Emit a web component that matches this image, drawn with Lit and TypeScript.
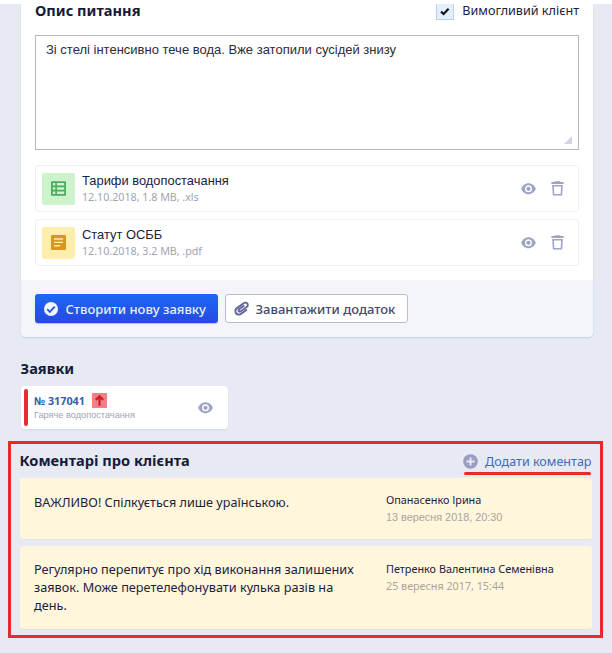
import { LitElement, html, css, svg, TemplateResult } from "lit";
import { customElement } from "lit/decorators.js";

interface FileItem { kind: "xls" | "pdf"; name: string; meta: string; }
interface Comment { text: string; author: string; date: string; tone: string; }

const files: FileItem[] = [
  { kind: "xls", name: "Тарифи водопостачання", meta: "12.10.2018, 1.8 MB, .xls" },
  { kind: "pdf", name: "Статут ОСББ", meta: "12.10.2018, 3.2 MB, .pdf" },
];

const comments: Comment[] = [
  { text: "ВАЖЛИВО! Спілкується лише ураїнською.", author: "Опанасенко Ірина", date: "13 вересня 2018, 20:30", tone: "short" },
  { text: "Регулярно перепитує про хід виконання залишених заявок. Може перетелефонувати кулька разів на день.", author: "Петренко Валентина Семенівна", date: "25 вересня 2017, 15:44", tone: "tall" },
];

const icon = (size: number, box: string, body: TemplateResult | unknown) =>
  html`<svg width=${size} height=${size} viewBox=${box}>${body}</svg>`;

const eye = () => html`<svg width="15" height="12" viewBox="0 0 15 12">
  <path fill="#9fa3c5" fill-rule="evenodd" d="M7.5 .3C4.2.3 1.4 2.6.2 5.8c1.2 3.2 4 5.5 7.3 5.5s6.1-2.3 7.3-5.5C13.6 2.6 10.8.3 7.5.3zm0 2a3.5 3.5 0 1 1 0 7 3.5 3.5 0 0 1 0-7z"/>
  <circle cx="7.5" cy="5.8" r="2.1" fill="#9fa3c5"/></svg>`;

const trash = () => html`<svg width="13" height="15" viewBox="0 0 13 15">
  <path fill="#9fa3c5" d="M4 .3h5l.6.8h3v1.9H.4V1.1h3z"/>
  <path fill="none" stroke="#9fa3c5" stroke-width="1.6" d="M2 4.7h9l-.6 9H2.6z"/></svg>`;

const sheet = svg`<path fill="#4bad5b" fill-rule="evenodd" d="M1 .2h13a1 1 0 0 1 1 1v12.6a1 1 0 0 1-1 1H1a1 1 0 0 1-1-1V1.2a1 1 0 0 1 1-1zM1.8 2v2.5h2.5V2zM5.9 2v2.5h7.3V2zM1.8 6.2v2.6h2.5V6.2zM5.9 6.2v2.6h7.3V6.2zM1.8 10.5V13h2.5v-2.5zM5.9 10.5V13h7.3v-2.5z"/>`;
const doc = svg`<rect width="15" height="15" rx="1.3" fill="#d89722"/><path stroke="#ffedac" stroke-width="1.4" d="M3 4h9M3 7.4h9M3 10.8h6"/>`;
const check = svg`<circle cx="7" cy="7" r="7" fill="#f3f6ff"/><path fill="none" stroke="#245be9" stroke-width="1.9" d="M3.2 7.2l2.6 2.6 5-5.2"/>`;
const plus = svg`<circle cx="7.5" cy="7.5" r="7.3" fill="#999dc0"/><path stroke="#e7eaf3" stroke-width="2" d="M7.5 3.4v8.2M3.4 7.5h8.2"/>`;
const clip = svg`<path fill="#62639a" transform="rotate(10 224 256)" d="M43.246 466.142c-58.43-60.289-57.341-157.511 1.386-217.581L254.392 34c44.316-45.332 116.351-45.336 160.671 0 43.89 44.894 43.943 117.329 0 162.276L232.214 383.128c-29.855 30.537-78.633 30.111-107.982-.998-28.275-29.97-27.368-77.473 1.452-106.953l143.743-146.835c6.182-6.314 16.312-6.422 22.626-.241l22.861 22.379c6.315 6.182 6.422 16.312.241 22.626L171.427 319.927c-4.932 5.045-5.236 13.428-.648 18.292 4.372 4.634 11.245 4.711 15.688.165l182.849-186.851c19.613-20.062 19.613-52.725-.011-72.798-19.189-19.627-49.957-19.637-69.154 0L90.39 293.295c-34.763 35.56-35.299 93.12-1.191 128.313 34.01 35.093 88.985 35.137 123.058.286l172.06-175.999c6.177-6.319 16.307-6.433 22.626-.256l22.877 22.364c6.319 6.177 6.434 16.307.256 22.626l-172.06 175.998c-59.576 60.938-155.943 60.216-214.77-.485z"/>`;
const arrow = svg`<rect width="15" height="15" rx=".8" fill="#f08086"/><path fill="none" stroke="#ca2026" stroke-width="2.2" d="M7.5 12.8V3.6M3.8 6.9l3.7-3.7 3.7 3.7"/>`;

@customElement("app-root")
export class AppRoot extends LitElement {
  static styles = css`
    :host { display: block; height: 653px; overflow: hidden; background: #e7eaf3; border-top: 4px solid #fff; box-sizing: border-box; color: #1d2140; font-family: "Noto Sans", "Open Sans", sans-serif; }
    * { box-sizing: border-box; }
    svg { display: block; flex: none; }
    h2 { margin: 0; font-size: 14.6px; line-height: 18px; font-weight: 700; color: #171b38; white-space: nowrap; }
    .card { margin: 0 19px 0 21px; height: 333px; background: #fff; border-radius: 0 0 5px 5px; box-shadow: 0 1px 2px #c9cfe4; display: flex; flex-direction: column; }
    .body { flex: 1; padding: 0 14px; }
    .head { display: flex; justify-content: space-between; height: 31px; }
    .head h2 { line-height: 12px; }
    .flag { display: flex; gap: 8px; font-size: 12.6px; line-height: 14px; white-space: nowrap; }
    .box { width: 18px; height: 16px; background: #e4effd; border: 1px solid #bfd0ee; border-top: 0; display: grid; place-items: center; }
    .area { position: relative; height: 115px; border: 1px solid #b4b8c6; padding: 5px 10px; font: 13px/18px "Liberation Sans", Arial, sans-serif; color: #2a2c38; white-space: nowrap; }
    .grip { position: absolute; right: 6px; bottom: 5px; }
    .files { margin-top: 15px; display: grid; gap: 7px; }
    .file { height: 47px; border: 1px solid #eeeff6; border-radius: 3px; display: flex; align-items: center; padding: 0 14.5px 0 6px; }
    .thumb { width: 33px; height: 32px; border-radius: 2px; display: grid; place-items: center; margin-right: 7px; }
    .xls { background: #cdf3cc; }
    .pdf { background: #ffedac; }
    .info { flex: 1; white-space: nowrap; }
    .name { font: 12.9px/17px "Liberation Sans", Arial, sans-serif; color: #1d2140; }
    .meta { font-size: 10.7px; line-height: 17px; color: #a0a3b3; }
    .file .tools { display: flex; gap: 15px; align-items: center; }
    .foot { height: 57px; background: #f4f5fa; border-radius: 0 0 5px 5px; padding: 14px; display: flex; gap: 7px; }
    .btn { height: 29px; border-radius: 3px; display: flex; align-items: center; white-space: nowrap; font-size: 13px; line-height: 20px; font-weight: 500; padding: 0 0 0 9px; gap: 7.5px; }
    .primary { width: 183px; background: linear-gradient(#1c68f5, #2649e2); color: #e8efff; box-shadow: 0 1px 1px #b9c3e4; }
    .plain { width: 183px; background: #fff; border: 1px solid #b9bdcc; color: #44486d; padding-left: 7.5px; gap: 7px; }
    .tickets { padding: 22px 21px 0 20.5px; height: 100px; }
    .ticket { margin: 9px 0 0 .5px; width: 207px; height: 43px; background: #fff; border-radius: 4px; box-shadow: 0 1px 2px #d4d9e8; display: flex; align-items: center; padding: 0 15px 0 3px; }
    .bar { width: 4px; height: 37px; border-radius: 2px; background: #e82c33; margin-right: 6px; }
    .tinfo { flex: 1; white-space: nowrap; }
    .num { display: flex; gap: 7.5px; align-items: center; height: 15px; font-size: 10.8px; font-weight: 700; color: #3460ac; }
    .sub { font: 9.2px/13px "Liberation Sans", Arial, sans-serif; color: #a0a3b3; margin-top: 1px; }
    .frame { margin: 4px 9px 0 8px; height: 197px; border: 3px solid #e72c26; padding: 0 8px 0 9px; }
    .chead { display: flex; justify-content: space-between; height: 34px; padding-top: 7px; }
    .chead h2 { margin-left: -.5px; }
    .add { position: relative; display: flex; gap: 7px; align-items: center; height: 20px; font-size: 12.55px; color: #426bb5; white-space: nowrap; padding-right: .5px; }
    .mark { position: absolute; left: 1px; right: 1px; bottom: -4px; height: 3px; border-radius: 2px; background: #e72c26; }
    .note { background: #fff6dc; border-radius: 3px; display: grid; grid-template-columns: 352px 1fr; padding: 14px 14px 0; box-shadow: 0 1px 1px #e4e3e2; }
    .short { height: 61px; }
    .tall { height: 83px; margin-top: 7px; padding-top: 15px; }
    .text { font-size: 12.7px; line-height: 18px; width: 335px; }
    .short .text { font-size: 12.65px; padding-top: 1px; }
    .tall .text { margin-top: -1px; }
    .author { font-size: 10.85px; line-height: 16px; white-space: nowrap; }
    .date { font-size: 10.75px; line-height: 18px; color: #a9a59c; white-space: nowrap; }
    .short .date { font: 10.85px/18px "Liberation Sans", Arial, sans-serif; }
  `;

  render() {
    return html`
      <section class="card">
        <div class="body">
          <div class="head">
            <h2>Опис питання</h2>
            <div class="flag">
              <span class="box"><svg width="10" height="9" viewBox="0 0 10 9"><path fill="none" stroke="#15171f" stroke-width="2.2" d="M1 4.6l2.6 2.4L8.6 1.8"/></svg></span>
              <span>Вимогливий клієнт</span>
            </div>
          </div>
          <div class="area"><span>Зі стелі інтенсивно тече вода. Вже затопили сусідей знизу</span>
            <svg class="grip" width="8" height="8" viewBox="0 0 8 8"><path fill="#d3d5e0" d="M8 0v8H0z"/></svg>
          </div>
          <div class="files">
            ${files.map((f) => html`<div class="file">
              <span class="thumb ${f.kind}">${icon(15, "0 0 15 15", f.kind === "xls" ? sheet : doc)}</span>
              <div class="info"><div class="name">${f.name}</div><div class="meta">${f.meta}</div></div>
              <div class="tools">${eye()}${trash()}</div>
            </div>`)}
          </div>
        </div>
        <div class="foot">
          <div class="btn primary">${icon(14, "0 0 14 14", check)}<span>Створити нову заявку</span></div>
          <div class="btn plain">${icon(15, "-32 0 512 512", clip)}<span>Завантажити додаток</span></div>
        </div>
      </section>
      <section class="tickets">
        <h2>Заявки</h2>
        <div class="ticket">
          <span class="bar"></span>
          <div class="tinfo">
            <div class="num"><span>№ 317041</span>${icon(15, "0 0 15 15", arrow)}</div>
            <div class="sub">Гаряче водопостачання</div>
          </div>
          ${eye()}
        </div>
      </section>
      <section class="frame">
        <div class="chead">
          <h2>Коментарі про клієнта</h2>
          <div class="add">${icon(15, "0 0 15 15", plus)}<span>Додати коментар</span><i class="mark"></i></div>
        </div>
        ${comments.map((c) => html`<div class="note ${c.tone}">
          <div class="text">${c.text}</div>
          <div><div class="author">${c.author}</div><div class="date">${c.date}</div></div>
        </div>`)}
      </section>`;
  }
}
